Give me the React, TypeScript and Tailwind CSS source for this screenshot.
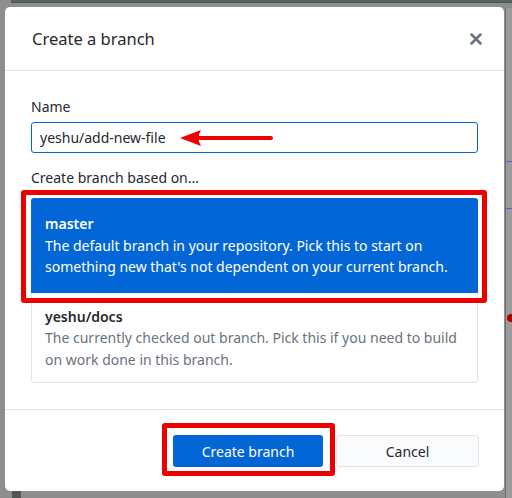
import { X } from 'lucide-react';

const font = { fontFamily: '"Noto Sans", "Open Sans", Arial, sans-serif' };

const RedArrow = () => (
  <svg className="absolute left-[148px] top-[7px]" width="96" height="18" viewBox="0 0 96 18">
    <path d="M1 9 L22 1 Q17 9 22 17 Z" fill="#ec0000" />
    <line x1="19" y1="9" x2="92" y2="9" stroke="#ec0000" strokeWidth="4" strokeLinecap="round" />
  </svg>
);

export default function App() {
  return (
    <div className="relative w-[512px] h-[498px] overflow-hidden bg-[#8e8e8e]" style={font}>
      {/* page behind the dialog */}
      <div className="absolute left-[11px] right-0 top-0 h-[2px] bg-[#5e5e5e]" />
      <div className="absolute left-[11px] right-0 top-[2px] h-[1px] bg-[#2e6b3a]" />
      <div className="absolute left-[505px] top-[8px] bottom-0 w-[7px] bg-[#9c9c9c] border-l border-[#6e6e6e]" />
      <div className="absolute left-[506px] top-[161px] w-[6px] h-[1px] bg-[#3b6fb5]" />
      <div className="absolute left-[506px] top-[208px] w-[6px] h-[1px] bg-[#3b6fb5]" />
      <div className="absolute left-[507px] top-[314px] w-[5px] h-[8px] bg-[#b30000] rounded-l-full" />
      <div className="absolute left-[12px] top-[491px] w-[1px] h-[7px] bg-[#2e6b3a]" />
      <div className="absolute left-[13px] top-[491px] w-[8px] h-[7px] bg-[#555]" />

      <div className="relative pt-[7px] pl-[5px]">
        <div className="w-[499px] h-[484px] bg-white rounded-[5px] flex flex-col">
          {/* Header */}
          <div className="h-[64px] flex items-center justify-between pl-[27px] pr-[19px] border-b border-[#e1e4e8]">
            <h2 className="text-[16.5px] text-[#24292e] mt-[2px]">Create a branch</h2>
            <X className="w-[18px] h-[18px] text-[#6a737d]" strokeWidth={3.4} />
          </div>

          {/* Body */}
          <div className="px-[26px] pt-[26px] pb-[26px] flex flex-col">
            <label className="text-[14px] leading-[20px] text-[#24292e]">Name</label>
            <div className="relative mt-[5px]">
              <div className="h-[31px] border border-[#0366d6] rounded-[3px] px-[8px] flex items-center text-[14px] text-[#24292e]">
                yeshu/add-new-file
              </div>
              <RedArrow />
            </div>
            <div className="mt-[15px] text-[14px] leading-[20px] text-[#24292e]">Create branch based on...</div>

            <div className="mt-[10px] border border-[#e1e4e8] rounded-[3px] flex flex-col">
              <div className="relative -m-[1px] bg-[#0366d6] rounded-t-[3px] pl-[14px] pr-[10px] pt-[15px] pb-[15px] text-white text-[14px] leading-[21.5px]">
                <div className="font-semibold">master</div>
                <div>
                  The default branch in your repository. Pick this to start on something new that's not dependent on
                  your current branch.
                </div>
                <div className="absolute left-[-10px] right-[-9px] top-[-8px] bottom-[-10px] border-[5px] border-[#ec0000] rounded-[3px]" />
              </div>
              <div className="pl-[13px] pr-[10px] pt-[14px] pb-[12px] text-[14px] leading-[21.5px]">
                <div className="font-semibold text-[#24292e]">yeshu/docs</div>
                <div className="text-[#6a737d]">
                  The currently checked out branch. Pick this if you need to build on work done in this branch.
                </div>
              </div>
            </div>
          </div>

          {/* Footer */}
          <div className="flex-1 border-t border-[#e1e4e8] flex justify-end items-start pt-[25px] pr-[25px] gap-[13px]">
            <div className="relative">
              <button className="w-[150px] h-[32px] rounded-[3px] bg-[#0366d6] text-white text-[14px]">
                Create branch
              </button>
              <div className="absolute left-[-11px] right-[-12px] top-[-12px] bottom-[-9px] border-[5px] border-[#ec0000] rounded-[3px]" />
            </div>
            <button className="w-[143px] h-[32px] rounded-[3px] bg-[#fafbfc] border border-[#e1e4e8] text-[#24292e] text-[14px]">
              Cancel
            </button>
          </div>
        </div>
      </div>
    </div>
  );
}
